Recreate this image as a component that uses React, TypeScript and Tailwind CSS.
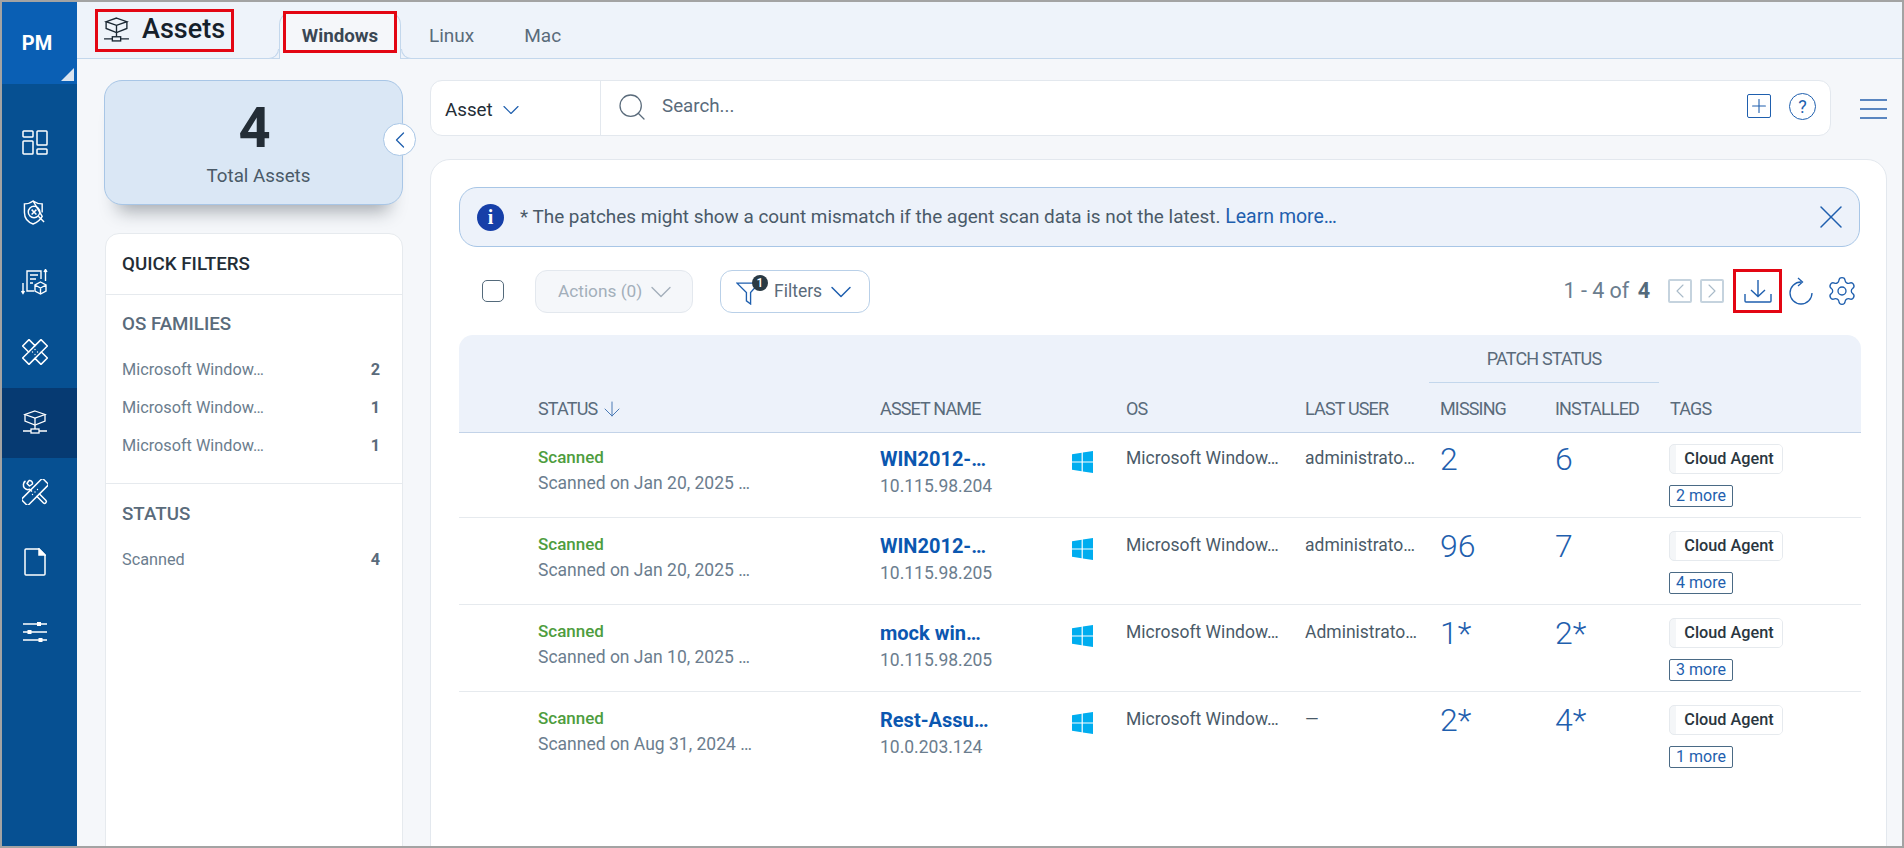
import { ChevronDown, ChevronLeft, ChevronRight, Search, Plus, X, ArrowDown, Settings } from 'lucide-react';

const osFamilies = [
    { label: 'Microsoft Window…', count: 2 },
    { label: 'Microsoft Window…', count: 1 },
    { label: 'Microsoft Window…', count: 1 },
];

const assets = [
    { scanned: 'Scanned on Jan 20, 2025 …', name: 'WIN2012-…', ip: '10.115.98.204', user: 'administrato…', missing: '2', installed: '6', more: '2 more' },
    { scanned: 'Scanned on Jan 20, 2025 …', name: 'WIN2012-…', ip: '10.115.98.205', user: 'administrato…', missing: '96', installed: '7', more: '4 more' },
    { scanned: 'Scanned on Jan 10, 2025 …', name: 'mock win…', ip: '10.115.98.205', user: 'Administrato…', missing: '1*', installed: '2*', more: '3 more' },
    { scanned: 'Scanned on Aug 31, 2024 …', name: 'Rest-Assu…', ip: '10.0.203.124', user: '—', missing: '2*', installed: '4*', more: '1 more' },
];

const gridCols = 'grid grid-cols-[79px_342px_192px_54px_179px_135px_115px_115px_1fr]';

function AssetIcon({ className }: { className?: string }) {
    return (
        <svg viewBox="0 0 26 24" fill="none" stroke="currentColor" strokeWidth="1.3" className={className}>
            <path d="M13 1 L23 4.5 L13 8 L3 4.5 Z" />
            <path d="M3 4.5 V11 L13 15 L23 11 V4.5" />
            <path d="M13 8 V19" />
            <rect x="9" y="19" width="8" height="4" />
            <path d="M1 21 H9 M17 21 H25" />
        </svg>
    );
}

function WindowsLogo() {
    return (
        <svg viewBox="0 0 21 22" className="h-[22px] w-[21px]" fill="#00adef">
            <path d="M0 3.2 L9.6 1.8 V10.4 H0 Z" />
            <path d="M10.8 1.6 L21 0 V10.4 H10.8 Z" />
            <path d="M0 11.6 H9.6 V20.2 L0 18.8 Z" />
            <path d="M10.8 11.6 H21 V22 L10.8 20.4 Z" />
        </svg>
    );
}

function NavIcon({ active, children }: { active?: boolean; children: React.ReactNode }) {
    return (
        <div className={`flex h-[70px] items-center justify-center pr-[10px] pb-[2px] text-white ${active ? 'bg-[#063a72]' : ''}`}>
            {children}
        </div>
    );
}

function Sidebar() {
    return (
        <aside className="flex w-[75px] shrink-0 flex-col bg-[#065092]">
            <div className="relative flex h-[82px] items-center justify-center bg-[#0a5fb4] pr-[5px] text-[20px] font-bold text-white">
                PM
                <span className="absolute right-[3px] bottom-[3px] size-0 border-b-[13px] border-l-[13px] border-b-[#d9e4f0] border-l-transparent" />
            </div>
            <div className="mt-[24px] flex flex-col">
                <NavIcon>
                    <svg viewBox="0 0 26 25" fill="none" stroke="currentColor" strokeWidth="1.5" className="h-[25px] w-[26px]">
                        <rect x="1" y="1" width="10" height="6" rx="0.8" />
                        <rect x="1" y="11" width="10" height="13" rx="0.8" />
                        <rect x="15" y="1" width="10" height="14" rx="0.8" />
                        <rect x="15" y="19" width="10" height="5" rx="0.8" />
                    </svg>
                </NavIcon>
                <NavIcon>
                    <svg viewBox="0 0 24 26" fill="none" stroke="currentColor" strokeWidth="1.5" className="h-[25px] w-[23px]">
                        <path d="M10.5 1 C14 3.5 16.5 4 20 4 V13 M20 17 C18 21 14.5 23.5 10.5 25 C5 23 1.5 18.5 1.5 13 V4 C5 4 7.5 3.5 10.5 1 Z" />
                        <circle cx="11.5" cy="12.5" r="6" />
                        <path d="M9 10 L14 15 M14 10 L9 15 M16 17 L22 23" />
                    </svg>
                </NavIcon>
                <NavIcon>
                    <svg viewBox="0 0 27 26" fill="none" stroke="currentColor" strokeWidth="1.4" className="h-[26px] w-[27px]">
                        <path d="M6 14 V2 H20 V10" />
                        <path d="M9 6 H17 M9 10 H15 M9 14 H12" />
                        <path d="M6 14 V22 H13" />
                        <path d="M2 14 V24 M0.5 22 L2 24.5 L3.5 22" />
                        <path d="M24.5 12 V1 M23 3 L24.5 0.5 L26 3" />
                        <path d="M19.5 13 L25 16 V22 L19.5 25 L14 22 V16 Z M14 16 L19.5 19 L25 16 M19.5 19 V25" />
                    </svg>
                </NavIcon>
                <NavIcon>
                    <svg viewBox="0 0 26 26" fill="none" stroke="currentColor" strokeWidth="1.5" strokeLinejoin="round" className="h-[26px] w-[26px]">
                        <g transform="translate(13 13) rotate(45)">
                            <path d="M-4.5 -13 H4.5 V-4.5 H13 V4.5 H4.5 V13 H-4.5 V4.5 H-13 V-4.5 H-4.5 Z" />
                            <path d="M-4.5 -4.5 V4.5 M4.5 -4.5 V4.5" />
                        </g>
                        <circle cx="13" cy="10.5" r="0.7" fill="currentColor" stroke="none" />
                        <circle cx="10.5" cy="13" r="0.7" fill="currentColor" stroke="none" />
                        <circle cx="15.5" cy="13" r="0.7" fill="currentColor" stroke="none" />
                        <circle cx="13" cy="15.5" r="0.7" fill="currentColor" stroke="none" />
                    </svg>
                </NavIcon>
                <NavIcon active>
                    <AssetIcon className="h-[24px] w-[26px]" />
                </NavIcon>
                <NavIcon>
                    <svg viewBox="0 0 26 26" fill="none" stroke="currentColor" strokeWidth="1.5" strokeLinejoin="round" className="h-[26px] w-[26px]">
                        <rect x="-4.5" y="-15" width="9" height="30" rx="1.5" transform="translate(13 13) rotate(45)" />
                        <path d="M3.5 2 C1 3.5 0.8 7 2.5 9 C4 10.5 6 11 7.5 10.3 L10 12.5 M7 1.5 L5 4.5 L7.5 7 L10.5 5 C10.8 3 9 1 7 1.5" />
                        <path d="M17 14.5 L24 21.5 C25.3 23 23 25.3 21.5 24 L14.5 17" />
                        <circle cx="13" cy="13" r="0.7" fill="currentColor" stroke="none" />
                        <circle cx="15.5" cy="10.5" r="0.7" fill="currentColor" stroke="none" />
                        <circle cx="10.5" cy="15.5" r="0.7" fill="currentColor" stroke="none" />
                    </svg>
                </NavIcon>
                <NavIcon>
                    <svg viewBox="0 0 22 28" fill="none" stroke="currentColor" strokeWidth="1.5" className="h-[28px] w-[22px]">
                        <path d="M1 2 Q1 1 2 1 H15 L21 7 V26 Q21 27 20 27 H2 Q1 27 1 26 Z" />
                        <path d="M15 1 V7 H21 Z" fill="currentColor" />
                    </svg>
                </NavIcon>
                <NavIcon>
                    <svg viewBox="0 0 26 22" fill="none" className="h-[22px] w-[26px]">
                        <path d="M1 3 H25 M1 11 H25 M1 19 H25" stroke="currentColor" strokeWidth="1.3" />
                        <rect x="15" y="1" width="4" height="4" fill="currentColor" />
                        <rect x="5.5" y="9" width="4" height="4" fill="currentColor" />
                        <rect x="16.5" y="17" width="4" height="4" fill="currentColor" />
                    </svg>
                </NavIcon>
            </div>
        </aside>
    );
}

function TopBar() {
    return (
        <header className="flex h-[57px] shrink-0 items-end border-b border-[#c3d7ec] bg-[#eef3fa] pl-[18px]">
            <div className="mb-[6px] flex h-[43px] w-[139px] items-center gap-[12px] border-[3px] border-[#e30613] pb-[3px] pl-[5px]">
                <AssetIcon className="h-[25px] w-[27px] text-[#1a2733]" />
                <span className="text-[27px] leading-none font-medium text-[#15202b]">Assets</span>
            </div>
            <div className="relative mb-[-1px] ml-[45px] flex h-[48px] w-[122px] items-center justify-center rounded-t-[14px] border border-b-0 border-[#c3d7ec] bg-[#f5f7fa] pt-px">
                <span className="absolute bottom-0 left-[-11px] size-[10px] rounded-br-[10px] border-r border-b border-[#c3d7ec] bg-[#eef3fa]" />
                <span className="absolute right-[-11px] bottom-0 size-[10px] rounded-bl-[10px] border-b border-l border-[#c3d7ec] bg-[#eef3fa]" />
                <span className="absolute top-[-1px] right-[3px] left-[3px] h-[42px] border-[3px] border-[#e30613]" />
                <span className="text-[18.75px] font-bold text-[#3a4754]">Windows</span>
            </div>
            <div className="mb-[8px] ml-[28px] flex gap-[50px] text-[19px] text-[#5a6b7b]">
                <span>Linux</span>
                <span>Mac</span>
            </div>
        </header>
    );
}

function FilterPanel() {
    return (
        <div className="relative w-[299px] shrink-0">
            <div className="flex h-[125px] flex-col items-center rounded-[18px] border border-[#a8c6e6] bg-[#dae7f5] shadow-[0_20px_18px_-14px_rgba(40,50,60,0.4)]">
                <span className="mt-[15px] pl-[2px] text-[56px] leading-[64px] font-bold text-[#232d36]">4</span>
                <span className="mt-[5px] pl-[10px] text-[18.75px] leading-[22px] text-[#4a5a68]">Total Assets</span>
            </div>
            <button className="absolute top-[43px] right-[-13px] flex size-[33px] items-center justify-center rounded-full border border-[#a8c6e6] bg-white text-[#1f5fae]">
                <ChevronLeft className="size-[28px] shrink-0" strokeWidth={1.1} />
            </button>
            <div className="mt-[28px] ml-px h-[700px] rounded-t-[14px] border border-[#e6eaee] bg-white">
                <div className="flex h-[61px] items-center border-b border-[#e6eaee] pl-[16px] text-[18.75px] font-medium text-[#232d36]">
                    QUICK FILTERS
                </div>
                <div className="h-[189px] border-b border-[#e6eaee] pt-[18px] pl-[16px]">
                    <div className="text-[18.75px] leading-[22px] font-medium text-[#5a6b7b]">OS FAMILIES</div>
                    <div className="mt-[24px] flex flex-col gap-[16px] pr-[22px]">
                        {osFamilies.map((family, index) => (
                            <div key={index} className="flex h-[22px] items-center justify-between text-[16.25px] text-[#6b7d8e]">
                                <span>{family.label}</span>
                                <span className="font-bold text-[#5a6b7b]">{family.count}</span>
                            </div>
                        ))}
                    </div>
                </div>
                <div className="pt-[19px] pr-[22px] pl-[16px]">
                    <div className="text-[18.75px] leading-[22px] font-medium text-[#5a6b7b]">STATUS</div>
                    <div className="mt-[24px] flex h-[22px] items-center justify-between text-[16.25px] text-[#6b7d8e]">
                        <span>Scanned</span>
                        <span className="font-bold text-[#5a6b7b]">4</span>
                    </div>
                </div>
            </div>
        </div>
    );
}

function SearchRow() {
    return (
        <div className="flex items-start">
            <div className="flex h-[56px] w-[1401px] items-center rounded-[12px] border border-[#e3e8ee] bg-white">
                <div className="flex h-full w-[170px] items-center gap-[4px] border-r border-[#e3e8ee] pt-[4px] pl-[14px] text-[18.75px] text-[#232d36]">
                    Asset
                    <ChevronDown className="size-[28px] text-[#1f5fae]" strokeWidth={1} />
                </div>
                <Search className="mb-[3px] ml-[15px] size-[32px] text-[#5a6b7b]" strokeWidth={0.95} />
                <span className="mb-[3px] ml-[14px] flex-1 text-[18.75px] text-[#5a6b7b]">Search...</span>
                <div className="mb-[4px] flex size-[24px] items-center justify-center rounded-[2px] border border-[#1f5fae] text-[#1f5fae]">
                    <Plus className="size-[22px] shrink-0" strokeWidth={1.2} />
                </div>
                <div className="mr-[14px] mb-[4px] ml-[18px] flex size-[27px] items-center justify-center rounded-full border border-[#1f5fae] text-[18px] text-[#1f5fae]">
                    ?
                </div>
            </div>
            <div className="mt-[19px] ml-[29px] flex w-[27px] flex-col gap-[7px]">
                <span className="h-[2px] bg-[#5a86c0]" />
                <span className="h-[2px] bg-[#5a86c0]" />
                <span className="h-[2px] bg-[#5a86c0]" />
            </div>
        </div>
    );
}

function Toolbar() {
    return (
        <div className="mt-[21px] flex h-[46px] items-center">
            <span className="ml-[23px] size-[22px] rounded-[5px] border border-[#546a7b]" />
            <div className="ml-[31px] flex h-[43px] w-[158px] items-center gap-px rounded-[12px] border border-[#e3e8ee] bg-[#f5f7fa] pt-px pl-[22px] text-[17.25px] text-[#a3afba]">
                Actions (0)
                <ChevronDown className="size-[36px]" strokeWidth={0.9} />
            </div>
            <div className="relative mt-px ml-[27px] flex h-[43px] w-[150px] items-center rounded-[12px] border border-[#b9d0e8] bg-white pl-[53px] text-[17.5px] text-[#5a6b7b]">
                <svg viewBox="0 0 24 24" fill="none" stroke="#1f5fae" strokeWidth="1.3" className="absolute top-[9px] left-[15px] size-[25px]">
                    <path d="M1 3 H22 L14 12 V23 L10 20 V12 Z" />
                </svg>
                <span className="absolute top-[4px] left-[31px] flex size-[16px] items-center justify-center rounded-full bg-[#2a3a44] text-[12px] font-medium text-white">
                    1
                </span>
                Filters
                <ChevronDown className="ml-[1px] size-[36px] text-[#1f5fae]" strokeWidth={1} />
            </div>
            <span className="ml-auto text-[21.5px] text-[#6b7d8e]">
                1 - 4 of <b className="ml-[3px] text-[21.5px] text-[#546a7b]">4</b>
            </span>
            <div className="ml-[18px] flex size-[24px] items-center justify-center rounded-[2px] border-2 border-[#c5d3de] text-[#a9bac8]">
                <ChevronLeft className="size-[24px] shrink-0" strokeWidth={1.1} />
            </div>
            <div className="ml-[8px] flex size-[24px] items-center justify-center rounded-[2px] border-2 border-[#c5d3de] text-[#a9bac8]">
                <ChevronRight className="size-[24px] shrink-0" strokeWidth={1.1} />
            </div>
            <div className="mb-px ml-[9px] flex h-[44px] w-[49px] items-center justify-center border-[3px] border-[#e30613]">
                <svg viewBox="0 0 28 24" fill="none" stroke="#1f5fae" strokeWidth="1.4" className="h-[24px] w-[28px]">
                    <path d="M14 1 V17 M7 11 L14 17.5 L21 11" />
                    <path d="M1 15 V22 Q1 23 2 23 H26 Q27 23 27 22 V15" />
                </svg>
            </div>
            <svg viewBox="0 0 24 28" fill="none" stroke="#1f5fae" strokeWidth="1.3" className="ml-[7px] h-[28px] w-[24px]">
                <path d="M12 5 A11 11 0 1 0 23 16" />
                <path d="M9 1 L13.5 5 L9 9" />
            </svg>
            <Settings className="ml-[13px] size-[32px] text-[#1f5fae]" strokeWidth={1} />
        </div>
    );
}

function AssetTable() {
    return (
        <div className="mt-[21px] w-[1402px]">
            <div className="h-[98px] rounded-t-[14px] border-b border-[#c3d3e8] bg-[#edf2fa] text-[18px] tracking-[-0.85px] text-[#5a6b7b]">
                <div className="ml-[970px] h-[48px] w-[230px] border-b border-[#c3d7ec] pt-[10px] text-center">
                    PATCH STATUS
                </div>
                <div className={`${gridCols} pt-[12px]`}>
                    <span />
                    <span className="flex items-center gap-[3px]">
                        STATUS
                        <ArrowDown className="size-[24px] text-[#4a7ab5]" strokeWidth={1} />
                    </span>
                    <span className="col-span-2">ASSET NAME</span>
                    <span>OS</span>
                    <span>LAST USER</span>
                    <span>MISSING</span>
                    <span>INSTALLED</span>
                    <span>TAGS</span>
                </div>
            </div>
            {assets.map((asset, index) => (
                <div
                    key={index}
                    className={`${gridCols} h-[87px] ${index === 0 ? 'mt-[-2px]' : ''} ${index < 3 ? 'border-b border-[#e6eaee]' : ''}`}
                >
                    <span />
                    <div className="pt-[16px]">
                        <div className="text-[17px] leading-[20px] font-medium text-[#4e9d3e]">Scanned</div>
                        <div className="mt-[6px] text-[17.5px] leading-[20px] text-[#6b7d8e]">{asset.scanned}</div>
                    </div>
                    <div className="pt-[18px]">
                        <div className="text-[20px] leading-[20px] font-bold text-[#0b57b0]">{asset.name}</div>
                        <div className="mt-[7px] text-[17.5px] leading-[20px] text-[#6b7d8e]">{asset.ip}</div>
                    </div>
                    <div className="pt-[20px]">
                        <WindowsLogo />
                    </div>
                    <div className="pt-[17px] text-[17.5px] leading-[20px] text-[#4a5a68]">Microsoft Window…</div>
                    <div className="pt-[17px] text-[17.5px] leading-[20px] text-[#4a5a68]">{asset.user}</div>
                    <div className="pt-[12px] text-[32px] leading-[32px] font-light text-[#1f5fae]">{asset.missing}</div>
                    <div className="pt-[12px] text-[32px] leading-[32px] font-light text-[#1f5fae]">{asset.installed}</div>
                    <div className="ml-[-1px] pt-[13px]">
                        <div className="flex h-[30px] w-[114px] overflow-hidden rounded-[5px] border border-[#e6eaee] bg-[#f4f6f8]">
                            <span className="ml-[6px] flex flex-1 items-center justify-center bg-white text-[16.25px] font-medium text-[#2a3640]">
                                Cloud Agent
                            </span>
                        </div>
                        <div className="mt-[11px] flex h-[22px] w-[64px] items-center justify-center rounded-[2px] border border-[#4a6a85] text-[16px] text-[#1f5fae]">
                            {asset.more}
                        </div>
                    </div>
                </div>
            ))}
        </div>
    );
}

export default function App() {
    return (
        <div className="flex h-[848px] w-[1904px] overflow-hidden border-2 border-[#a3a3a3] bg-[#f5f7fa] font-['Roboto',sans-serif]">
            <Sidebar />
            <main className="flex min-w-0 flex-1 flex-col">
                <TopBar />
                <div className="flex gap-[27px] pt-[21px] pl-[27px]">
                    <FilterPanel />
                    <div className="flex-1">
                        <SearchRow />
                        <section className="mt-[23px] h-[700px] w-[1457px] rounded-t-[20px] border border-[#e3e8ee] bg-white px-[28px] pt-[27px]">
                            <div className="flex h-[60px] w-[1401px] items-center rounded-[18px] border border-[#a8c6e6] bg-[#edf2fa] pr-[8px] pl-[17px]">
                                <span className="flex size-[27px] items-center justify-center rounded-full bg-[#163fa8] font-['Liberation_Serif',serif] text-[20px] font-bold text-white">
                                    i
                                </span>
                                <span className="ml-[16px] flex-1 text-[18.9px] text-[#4a5a68]">
                                    * The patches might show a count mismatch if the agent scan data is not the latest.{' '}
                                    <span className="text-[19.5px] text-[#1f5fae]">Learn more…</span>
                                </span>
                                <X className="size-[40px] text-[#1f5fae]" strokeWidth={0.9} />
                            </div>
                            <Toolbar />
                            <AssetTable />
                        </section>
                    </div>
                </div>
            </main>
        </div>
    );
}
